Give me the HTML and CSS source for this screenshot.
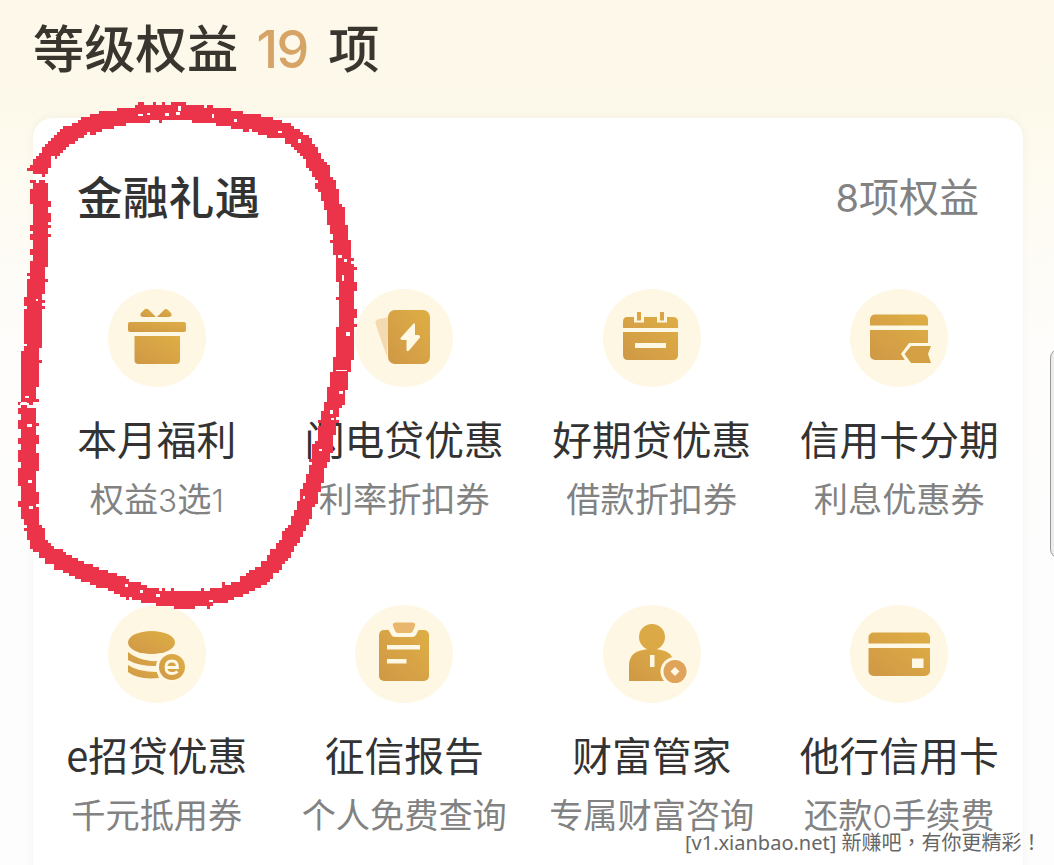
FILE: index.html
```
<!DOCTYPE html>
<html lang="zh-CN">
<head>
  <meta charset="UTF-8" />
  <meta name="viewport" content="width=device-width, initial-scale=1.0" />
  <title>等级权益</title>
  <link rel="stylesheet" href="styles.css">
</head>
<body>
  <h1 class="page-title">等级权益<span class="count">19</span>项</h1>

  <div class="card">
    <div class="card-header">
      <h2>金融礼遇</h2>
      <div class="more"><span class="num">8</span>项权益</div>
    </div>

    <div class="benefits">
      <div class="benefit">
        <svg class="icon" viewBox="0 0 98 98">
          <defs>
            <linearGradient id="gold" x1="1" y1="0" x2="0" y2="1">
              <stop offset="0" stop-color="#dfae45" />
              <stop offset="1" stop-color="#cf9846" />
            </linearGradient>
          </defs>
          <g fill="url(#gold)">
            <path d="M33 24 L37 20 Q39 19 41 21 L48 28 H35 Q31 27 33 24Z" />
            <path d="M49 28 L56 21 Q58 19 60 21 L63 24 Q65 27 61 28Z" />
            <rect x="20" y="33" width="58" height="10" rx="2" />
            <path d="M26.500 47H72V71Q72 75 68 75H30.500Q26.500 75 26.500 71Z" />
          </g>
        </svg>
        <div class="name">本月福利</div>
        <div class="desc">权益<span class="num">3</span>选<span class="num">1</span></div>
      </div>

      <div class="benefit">
        <svg class="icon" viewBox="0 0 98 98">
          <path d="M34 28 L24 30 Q19 31 21 36 L32 68Z" fill="#f3dab0" />
          <rect x="33" y="21" width="42" height="54" rx="7" fill="url(#gold)" />
          <path d="M59 34 L45.500 49 Q45 51 47 51 H51.500 V61 Q52 63 54 61.500 L65 48.500 Q65.500 46 63 46 H60 V35Z" fill="#fff8e5" />
        </svg>
        <div class="name">闪电贷优惠</div>
        <div class="desc">利率折扣券</div>
      </div>

      <div class="benefit">
        <svg class="icon" viewBox="0 0 98 98">
          <path d="M24 28H70Q75 28 75 33V66Q75 71 70 71H25Q20 71 20 66V33Q20 28 24 28Z" fill="url(#gold)" />
          <path d="M31 27V33.500H41V27M54 27V33.500H64V27" fill="#fff8e5" />
          <path d="M34 23H38V31.500H34ZM57 23H61V31.500H57Z" fill="#d9a546" />
          <path d="M20 39H75V43H20ZM32 54H63V59H32Z" fill="#fff8e5" />
        </svg>
        <div class="name">好期贷优惠</div>
        <div class="desc">借款折扣券</div>
      </div>

      <div class="benefit">
        <svg class="icon" viewBox="0 0 98 98">
          <rect x="20" y="25.500" width="58" height="45.500" rx="5" fill="url(#gold)" />
          <path d="M20 36.500H78V41H20Z" fill="#fff8e5" />
          <path d="M59 54H82V76H58L51 65Z" fill="#fff8e5" />
          <path d="M61 57H81L78 65L81 74H61L54.500 65Z" fill="#d5a043" />
        </svg>
        <div class="name">信用卡分期</div>
        <div class="desc">利息优惠券</div>
      </div>

      <div class="benefit">
        <svg class="icon" viewBox="0 0 98 98">
          <g fill="url(#gold)">
            <ellipse cx="43.500" cy="37.500" rx="23.500" ry="11.500" />
            <path d="M20 47Q28 54 43 56Q49 56.500 56 55L48 61Q30 61 20 55Z" />
            <path d="M20 60Q30 67 49 67L51 73Q30 75 20 67Z" />
          </g>
          <circle cx="64" cy="62" r="16" fill="#fff8e5" />
          <circle cx="64" cy="62" r="13" fill="url(#gold)" />
          <path d="M58 62.500H69.500Q69.500 56 64 56Q58 56 58 62.500Q58 68.500 64 68.500Q67.500 68.500 69.500 66.500" fill="none" stroke="#fff8e5" stroke-width="2.800" />
        </svg>
        <div class="name">e招贷优惠</div>
        <div class="desc">千元抵用券</div>
      </div>

      <div class="benefit">
        <svg class="icon" viewBox="0 0 98 98">
          <rect x="24" y="25" width="50" height="51" rx="5" fill="url(#gold)" />
          <path d="M33 24L37 31Q38.500 32 41 32H57Q60 32 61 30L64 24" fill="#fff8e5" />
          <path d="M40 17.500H58Q61 18 60 21L58 26Q57 28 55 28H43Q41 28 40 26L38 21Q37 18 40 17.500Z" fill="#e8b76d" />
          <path d="M32 40H65V44.500H32ZM32 54H51.500V58.500H32Z" fill="#fff8e5" />
        </svg>
        <div class="name">征信报告</div>
        <div class="desc">个人免费查询</div>
      </div>

      <div class="benefit">
        <svg class="icon" viewBox="0 0 98 98">
          <circle cx="49" cy="32" r="13" fill="#dba945" />
          <path d="M26 76V61Q26 47 40 45L45 44V41H53V44L58 45Q68 46 71 57V76Z" fill="url(#gold)" />
          <rect x="47" y="50" width="4.500" height="12" fill="#fff8e5" />
          <circle cx="72" cy="66.500" r="14.500" fill="#fff8e5" />
          <circle cx="72" cy="66.500" r="11.500" fill="#dfa35a" />
          <path d="M72 62L76.500 66.500L72 71L67.500 66.500Z" fill="#fff8e5" />
        </svg>
        <div class="name">财富管家</div>
        <div class="desc">专属财富咨询</div>
      </div>

      <div class="benefit">
        <svg class="icon" viewBox="0 0 98 98">
          <rect x="18.500" y="27.500" width="61.500" height="43.500" rx="5" fill="url(#gold)" />
          <path d="M18 38.500H80V43H18ZM62 53.500H73.500V63H62Z" fill="#fff8e5" />
        </svg>
        <div class="name">他行信用卡</div>
        <div class="desc">还款<span class="num">0</span>手续费</div>
      </div>
    </div>
  </div>

  <!-- 手绘红圈 -->
  <svg class="marker" viewBox="0 0 380 620">
    <defs>
      <!-- 边缘打散，再按 3px 方块取样 -->
      <filter id="rough" x="0" y="0" width="380" height="620" filterUnits="userSpaceOnUse" primitiveUnits="userSpaceOnUse" color-interpolation-filters="sRGB">
        <feTurbulence type="fractalNoise" baseFrequency="0.14" numOctaves="1" seed="4" />
        <feDisplacementMap in="SourceGraphic" scale="8" xChannelSelector="R" yChannelSelector="G" result="torn" />
        <feFlood x="1" y="1" width="1" height="1" flood-color="#000" />
        <feComposite x="0" y="0" width="3" height="3" operator="over" in2="SourceGraphic" />
        <feTile result="dots" />
        <feComposite in="torn" in2="dots" operator="in" />
        <feMorphology operator="dilate" radius="1" />
        <feComponentTransfer>
          <feFuncA type="discrete" tableValues="0 1" />
        </feComponentTransfer>
      </filter>
    </defs>
    <g filter="url(#rough)">
      <path class="ink" d="M37 174C38 166 44 158 52 150C66 136 78 125 110 119C146 110 178 109 215 116C250 122 286 128 300 142C316 157 328 186 336 215C344 250 347 280 347 312C346 355 338 388 326 430C320 460 314 484 306 506C296 532 284 553 266 571C245 588 218 599 187 600C150 599 118 586 83 571C63 563 48 556 40 544C31 530 28 505 28 480V407" />
      <path class="ink" d="M29 402C30 360 33 318 36 290C40 260 41 245 41 225L40 181" />
    </g>
    <g class="gaps">
      <path d="M178 106h3v5h-3zM176 112h4v3h-4zM147 113h3v2h-3zM165 113h4v3h-4zM138 114h5v2h-5zM212 114h2v4h-2zM234 119h3v3h-3zM278 131h4v2h-4zM298 139h3v4h-3zM51 156h4v3h-4z" />
      <path d="M338 255h4v3h-4zM344 259h3v3h-3zM342 275h2v6h-2zM346 332h4v4h-4zM336 370h11v1h-11zM339 391h4v3h-4zM330 410h3v4h-3zM331 418h3v2h-3zM319 449h3v2h-3zM303 496h2v3h-2z" />
      <path d="M23 344h4v2h-4zM20 403h9v2h-9zM27 424h5v3h-5zM28 480h4v3h-4zM29 506h4v3h-4zM25 396h4v2h-4zM36 299h2v2h-2zM125 584h3v3h-3zM140 590h3v3h-3zM156 594h4v3h-4zM209 600h4v2h-4z" />
    </g>
  </svg>

  <div class="side-handle"></div>
  <div class="watermark">[v1.xianbao.net] <span lang="zh-TW">新赚吧，有你更精彩！</span></div>
</body>
</html>
```
FILE: styles.css
```
* {
  box-sizing: border-box;
}

body {
  margin: 0;
  padding: 0 31px 0 33px;
  height: 865px;
  overflow: hidden;
  position: relative;
  font-family: "Noto Sans CJK SC", sans-serif;
  background: linear-gradient(#fdf8ea 0, #fdf9ea 110px, #fefbf3 200px, #fefdfb 350px, #fdfdfd 560px);
  color: #333;
}

.page-title {
  margin: 0;
  height: 118px;
  padding-top: 11px;
  font-size: 51.300px;
  line-height: 70px;
  font-weight: 500;
  color: #39362f;
}

.count {
  display: inline-block;
  width: 90px;
  padding-right: 2px;
  text-align: center;
  font-family: Inter, sans-serif;
  font-size: 52px;
  font-weight: 500;
  letter-spacing: -1.500px;
  line-height: 1;
  color: #d6a467;
}

.card {
  height: 780px;
  background: #fff;
  border-radius: 20px;
  box-shadow: 0 0 8px rgba(90, 80, 60, 0.06);
}

.card-header {
  display: flex;
  justify-content: space-between;
  align-items: center;
  height: 154px;
  padding: 0 44px;
}

.card-header h2 {
  margin: 0;
  font-size: 45.800px;
  font-weight: 500;
}

.more {
  font-size: 40px;
  color: #828282;
}

.num {
  font-family: Inter, sans-serif;
  font-size: 0.92em;
  font-weight: 300;
  line-height: 1;
}

.more .num {
  font-size: 0.95em;
  font-weight: 400;
}

.benefits {
  display: grid;
  grid-template-columns: repeat(4, 1fr);
  grid-auto-rows: 237px;
  row-gap: 79px;
  padding-top: 17px;
}

.benefit {
  display: flex;
  flex-direction: column;
  align-items: center;
  white-space: nowrap;
}

.icon {
  width: 98px;
  height: 98px;
  margin-bottom: 21px;
  border-radius: 50%;
  background: #fef7e3;
}

.name {
  font-size: 39.800px;
  line-height: 60px;
}

.desc {
  font-size: 34.200px;
  line-height: 58px;
  color: #828282;
}

.marker {
  position: absolute;
  left: 0;
  top: 0;
  width: 380px;
  height: 620px;
}

.ink {
  fill: none;
  stroke: #eb3449;
  stroke-width: 17.500;
}

.gaps {
  fill: #fff;
}

.side-handle {
  position: absolute;
  left: 1050px;
  top: 348px;
  width: 20px;
  height: 211px;
  border: 1px solid #999;
  border-radius: 10px;
  background: #ececec;
}

.watermark {
  position: absolute;
  left: 685px;
  bottom: 7px;
  font-family: "Noto Sans", "Noto Sans CJK TC", sans-serif;
  font-size: 20px;
  line-height: 30px;
  color: #666;
  white-space: nowrap;
}
```
